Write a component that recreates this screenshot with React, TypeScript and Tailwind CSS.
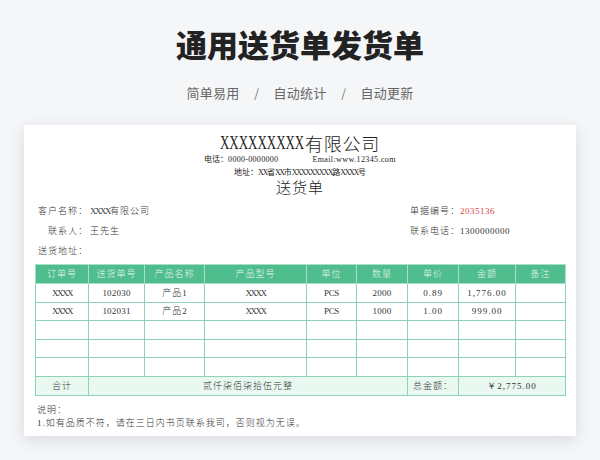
import type { ReactNode } from 'react';

// latin runs are half-width in the sheet, tracking per run gets them to that pitch
const L = ({ children, className = 'tracking-[0.2px]' }: { children: ReactNode; className?: string }) => (
  <span className={`font-['Liberation_Serif',serif] ${className}`}>{children}</span>
);
const X = ({ children, className = 'tracking-[-1.5px]' }: { children: ReactNode; className?: string }) => (
  <L className={className}>{children}</L>
);

const headers = [
  { label: '订单号', width: 'w-[53px]' },
  { label: '送货单号', width: 'w-[56px]' },
  { label: '产品名称', width: 'w-[60px]' },
  { label: '产品型号', width: 'w-[102px]' },
  { label: '单位', width: 'w-[50px]' },
  { label: '数量', width: 'w-[51px]' },
  { label: '单价', width: 'w-[51px]' },
  { label: '金额', width: 'w-[57px]' },
  { label: '备注', width: 'w-[50px]' },
];

const rows: ReactNode[][] = [
  [<X>XXXX</X>, <L>102030</L>, <>产品<L>1</L></>, <X>XXXX</X>, <L className="tracking-[-0.3px]">PCS</L>, <L>2000</L>, <L className="tracking-[1px]">0.89</L>, <L className="tracking-[1px]">1,776.00</L>, ''],
  [<X>XXXX</X>, <L>102031</L>, <>产品<L>2</L></>, <X>XXXX</X>, <L className="tracking-[-0.3px]">PCS</L>, <L>1000</L>, <L className="tracking-[1px]">1.00</L>, <L className="tracking-[1px]">999.00</L>, ''],
  ['', '', '', '', '', '', '', '', ''],
  ['', '', '', '', '', '', '', '', ''],
  ['', '', '', '', '', '', '', '', ''],
];

function Field({ label, value, red, wide }: { label: string; value?: ReactNode; red?: boolean; wide?: boolean }) {
  return (
    <div className="flex h-5 items-center">
      <span className={`w-[54px] text-right tracking-[1px] whitespace-nowrap ${wide ? 'pr-[2px]' : ''}`}>{label}</span>
      <span className={red ? 'text-[#d8444c] tracking-[1px]' : 'tracking-[1px]'}>{value}</span>
    </div>
  );
}

export default function App() {
  const tiny = 'tracking-[-1.3px]';
  return (
    <div className="h-[460px] w-[600px] overflow-hidden bg-[#f5f6f8] font-['Noto_Sans_CJK_SC',sans-serif]">
      <h1 className="pt-[22px] text-center text-[31px] leading-[44px] font-black text-[#222222]">通用送货单发货单</h1>
      <div className="mt-[15px] flex h-[24px] items-center justify-center text-[13px] text-[#666666]">
        <span className="tracking-[0.25px]">简单易用</span>
        <span className="w-[34px] text-center text-[12px] text-[#777777]">/</span>
        <span className="tracking-[0.25px]">自动统计</span>
        <span className="w-[34px] text-center text-[12px] text-[#777777]">/</span>
        <span className="tracking-[0.25px]">自动更新</span>
      </div>

      <div className="mx-[24px] mt-[20px] h-[311px] bg-white px-[11px] text-[#333333] shadow-[0_4px_14px_rgba(40,50,70,0.14)]">
        <div className="pt-[6px] text-center text-[#222222]">
          <div className="flex h-[21px] justify-center text-[18px] leading-[25px] font-light tracking-[0.75px]">
            <span className="inline-block w-[85px] origin-left scale-x-[0.72] font-['Liberation_Serif',serif] tracking-normal whitespace-nowrap">XXXXXXXXX</span>
            <span>有限公司</span>
          </div>
          <div className="flex h-[13px] items-center justify-center text-[8px] leading-[13px]">
            <span>电话：<L className="tracking-[0.3px]">0000-0000000</L></span>
            <span className="ml-[34px]"><L className="tracking-[0.4px]">Email:www.12345.com</L></span>
          </div>
          <div className="h-[13px] text-[8px] leading-[13px]">
            地址：<X className={tiny}>XX</X>省<X className={tiny}>XX</X>市<X className={tiny}>XXXXXXXXX</X>路<X className={tiny}>XXXX</X>号
          </div>
          <div className="h-[18px] text-[15px] leading-[18px] font-light tracking-[1px]">送货单</div>
        </div>

        <div className="mt-[5px] flex justify-between text-[9px] font-light">
          <div className="pl-[1px]">
            <Field wide label="客户名称：" value={<><X>XXXX</X>有限公司</>} />
            <Field wide label="联系人：" value="王先生" />
            <Field wide label="送货地址：" />
          </div>
          <div className="mr-[55px]">
            <Field label="单据编号：" value={<L className="tracking-[0.5px]">2035136</L>} red />
            <Field label="联系电话：" value={<L className="tracking-[0.5px]">1300000000</L>} />
          </div>
        </div>

        <table className="mt-[3px] w-[530px] table-fixed border-collapse text-center text-[9px] font-light">
          <thead>
            <tr className="h-[19px] bg-[#4fbd8d] text-[#e6f6ef]">
              {headers.map(h => (
                <th key={h.label} className={`${h.width} border border-[#a5dfc6] p-0 font-light tracking-[1px]`}>{h.label}</th>
              ))}
            </tr>
          </thead>
          <tbody>
            {rows.map((row, i) => (
              <tr key={i} className="h-[18.6px]">
                {row.map((cell, j) => (
                  <td key={j} className="border border-[#8ed3b5] p-0 tracking-[1px]">{cell}</td>
                ))}
              </tr>
            ))}
            <tr className="h-[19px] bg-[#e9f8f1]">
              <td className="border border-[#8ed3b5] p-0 tracking-[1px]">合计</td>
              <td colSpan={5} className="border border-[#8ed3b5] p-0 tracking-[1px]">贰仟柒佰柒拾伍元整</td>
              <td className="border border-[#8ed3b5] p-0 tracking-[1px]">总金额：</td>
              <td colSpan={2} className="border border-[#8ed3b5] p-0">
                <L className="tracking-[1px]">￥2,775.00</L>
              </td>
            </tr>
          </tbody>
        </table>

        <div className="mt-[7px] pl-[2px] text-[9px] leading-[13px] font-light tracking-[1px]">
          <div>说明：</div>
          <div><L className="tracking-[1px]">1.</L>如有品质不符，请在三日内书页联系我司，否则视为无误。</div>
        </div>
      </div>
    </div>
  );
}
